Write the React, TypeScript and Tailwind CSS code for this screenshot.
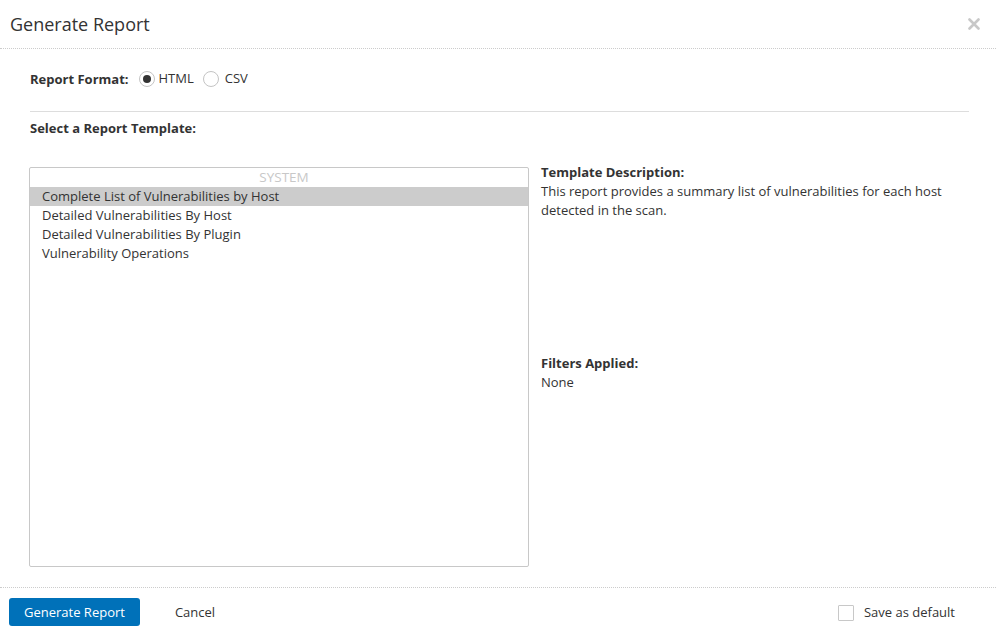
import React from "react";

const items = [
  "Complete List of Vulnerabilities by Host",
  "Detailed Vulnerabilities By Host",
  "Detailed Vulnerabilities By Plugin",
  "Vulnerability Operations",
];

export default function App() {
  return (
    <div
      className="w-[996px] h-[636px] bg-white flex flex-col text-[#333] text-[13px] overflow-hidden"
      style={{ fontFamily: '"Open Sans", "Noto Sans", sans-serif' }}
    >
      {/* Header */}
      <div className="h-[49px] shrink-0 flex items-center justify-between pl-[10px] pr-[16px] border-b border-dotted border-[#ccc]">
        <div className="text-[18px] leading-[24px] text-[#333] -mt-[1px]">Generate Report</div>
        <svg width="12" height="12" viewBox="0 0 12 12" className="-mt-[1px]">
          <path d="M1.5 1.5 L10.5 10.5 M10.5 1.5 L1.5 10.5" stroke="#c8c8c8" strokeWidth="2.6" strokeLinecap="round" />
        </svg>
      </div>

      {/* Body */}
      <div className="flex-1 px-[29px] pr-[27px] flex flex-col">
        <div className="mt-[20px] h-[20px] flex items-center">
          <span className="font-bold leading-[20px] ml-[1px]">Report Format:</span>
          <label className="flex items-center ml-[10px]">
            <span className="w-[16px] h-[16px] rounded-full border border-[#c4c4c4] flex items-center justify-center">
              <span className="w-[8px] h-[8px] rounded-full bg-[#333]" />
            </span>
            <span className="ml-[4px]">HTML</span>
          </label>
          <label className="flex items-center ml-[9px]">
            <span className="w-[16px] h-[16px] rounded-full border border-[#c4c4c4]" />
            <span className="ml-[6px]">CSV</span>
          </label>
        </div>

        <div className="mt-[22px] ml-[1px] border-t border-[#ddd]" />

        <div className="mt-[7px] ml-[1px] font-bold leading-[18px]">Select a Report Template:</div>

        <div className="mt-[30px] flex items-start">
          <div className="w-[500px] h-[400px] border border-[#c8c8c8] rounded-[2px] shrink-0">
            <div className="h-[19px] pl-[10px] text-center text-[13.5px] leading-[19px] text-[#c8c8c8] uppercase">System</div>
            {items.map((it, i) => (
              <div
                key={it}
                className={`h-[19px] leading-[19px] pl-[12px] ${i === 0 ? "bg-[#cccccc]" : ""}`}
              >
                {it}
              </div>
            ))}
          </div>

          <div className="ml-[12px] -mt-[4px] w-[428px]">
            <div className="font-bold leading-[19px]">Template Description:</div>
            <div className="leading-[19px] h-[172px]">
              This report provides a summary list of vulnerabilities for each host detected in the scan.
            </div>
            <div className="font-bold leading-[19px]">Filters Applied:</div>
            <div className="leading-[19px]">None</div>
          </div>
        </div>
      </div>

      {/* Footer */}
      <div className="h-[49px] shrink-0 border-t border-dotted border-[#ccc] flex items-start pt-[10px] pl-[9px] pr-[41px]">
        <button className="h-[28px] px-[15px] rounded-[3px] bg-[#0071b9] text-white text-[13px] leading-[28px]">
          Generate Report
        </button>
        <button className="h-[28px] ml-[35px] text-[13px] leading-[28px] text-[#333]">Cancel</button>
        <div className="ml-auto h-[28px] flex items-center mt-[1px]">
          <span className="w-[16px] h-[16px] border border-[#c8c8c8] rounded-[1px]" />
          <span className="ml-[10px]">Save as default</span>
        </div>
      </div>
    </div>
  );
}
